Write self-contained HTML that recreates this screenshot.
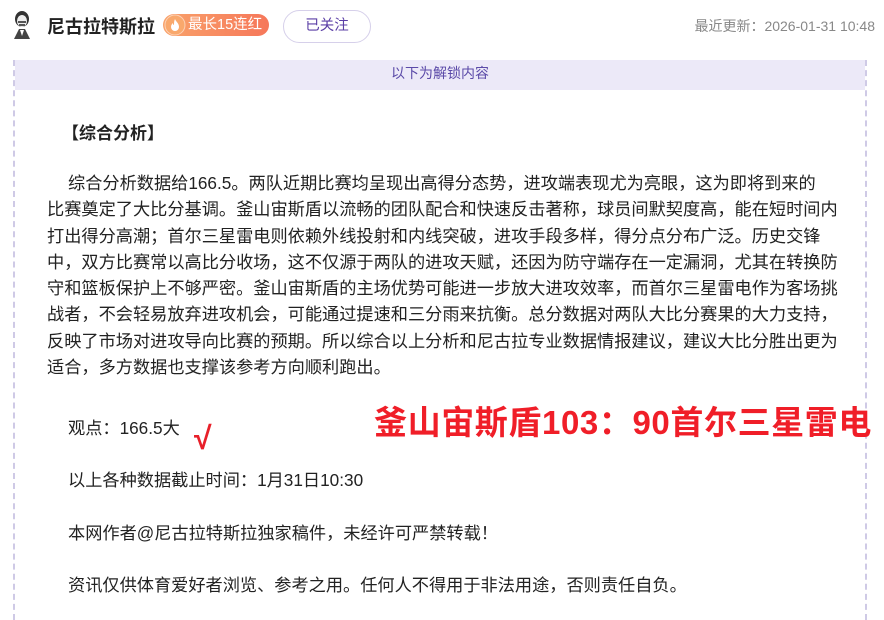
<!DOCTYPE html><html><head><meta charset="utf-8"><style>
body{margin:0;width:884px;height:604px;overflow:hidden;background:#fff;font-family:"Liberation Sans","Noto Sans CJK SC",sans-serif;color:#222;position:relative}
.a{position:absolute;white-space:nowrap}
.box{position:absolute;left:13px;top:60px;width:850px;height:560px;border-left:2px dashed #cfcae6;border-right:2px dashed #cfcae6}
.band{position:absolute;left:15px;top:60px;width:850px;height:30px;background:#ece9f8;color:#5b4aa8;font-size:14px;text-align:center;line-height:26px}
.p{position:absolute;left:47px;width:800px;font-size:17.2px;line-height:26.3px;color:#222;white-space:nowrap}
</style></head><body>
<div class="box"></div>
<div class="band">以下为解锁内容</div>
<svg class="a" style="left:8px;top:10px" width="28" height="30" viewBox="0 0 28 30"><ellipse cx="14" cy="9" rx="7" ry="8" fill="#333"/><ellipse cx="14" cy="11" rx="5" ry="6" fill="#eee"/><path d="M10 12h8M11 15h6" stroke="#222" stroke-width="1.5"/><path d="M6 29l5-10h6l5 10z" fill="#444"/><path d="M12 20l2 6 2-6" fill="#fff"/></svg>
<div class="a" style="left:47px;top:13px;font-size:18px;font-weight:bold;color:#222">尼古拉特斯拉</div>
<div class="a" style="left:163px;top:14px;width:106px;height:22px;border-radius:11px;background:linear-gradient(90deg,#f9a26a,#f6775a)"></div>
<svg class="a" style="left:164px;top:14px" width="22" height="22" viewBox="0 0 22 22"><circle cx="11" cy="11" r="10" fill="#f9a86c" stroke="#fff" stroke-opacity=".5"/><path d="M11 5c1 3 4 4 4 8a4 4 0 0 1-8 0c0-2 1-3 2-4 0 2 1 2 1 2 0-2 0-4 1-6z" fill="#fff"/></svg>
<div class="a" style="left:188px;top:14px;font-size:14.5px;line-height:22px;color:#fff">最长15连红</div>
<div class="a" style="left:283px;top:10px;width:86px;height:31px;border:1px solid #d6d0ea;border-radius:17px;text-align:center;line-height:31px;font-size:14.5px;color:#5b3fa6">已关注</div>
<div class="a" style="right:9px;top:16px;font-size:14px;color:#888">最近更新：2026-01-31 10:48</div>
<div class="a" style="left:62px;top:119px;font-size:17px;font-weight:bold">【综合分析】</div>
<div class="p" style="top:170px"><span style="padding-left:21px"></span>综合分析数据给166.5。两队近期比赛均呈现出高得分态势，进攻端表现尤为亮眼，这为即将到来的<br>比赛奠定了大比分基调。釜山宙斯盾以流畅的团队配合和快速反击著称，球员间默契度高，能在短时间内<br>打出得分高潮；首尔三星雷电则依赖外线投射和内线突破，进攻手段多样，得分点分布广泛。历史交锋<br>中，双方比赛常以高比分收场，这不仅源于两队的进攻天赋，还因为防守端存在一定漏洞，尤其在转换防<br>守和篮板保护上不够严密。釜山宙斯盾的主场优势可能进一步放大进攻效率，而首尔三星雷电作为客场挑<br>战者，不会轻易放弃进攻机会，可能通过提速和三分雨来抗衡。总分数据对两队大比分赛果的大力支持，<br>反映了市场对进攻导向比赛的预期。所以综合以上分析和尼古拉专业数据情报建议，建议大比分胜出更为<br>适合，多方数据也支撑该参考方向顺利跑出。</div>
<div class="a" style="left:68px;top:414px;font-size:17.2px">观点：166.5大</div>
<div class="a" style="left:194px;top:420px;font-size:32px;color:#e8202a;font-weight:bold">√</div>
<div class="a" style="left:374px;top:396px;font-size:33px;font-weight:bold;color:#f01e28;letter-spacing:0.6px">釜山宙斯盾103：90首尔三星雷电</div>
<div class="a" style="left:68px;top:466px;font-size:17.2px">以上各种数据截止时间：1月31日10:30</div>
<div class="a" style="left:68px;top:519px;font-size:17.2px">本网作者@尼古拉特斯拉独家稿件，未经许可严禁转载！</div>
<div class="a" style="left:68px;top:571px;font-size:17.2px">资讯仅供体育爱好者浏览、参考之用。任何人不得用于非法用途，否则责任自负。</div>
</body></html>
